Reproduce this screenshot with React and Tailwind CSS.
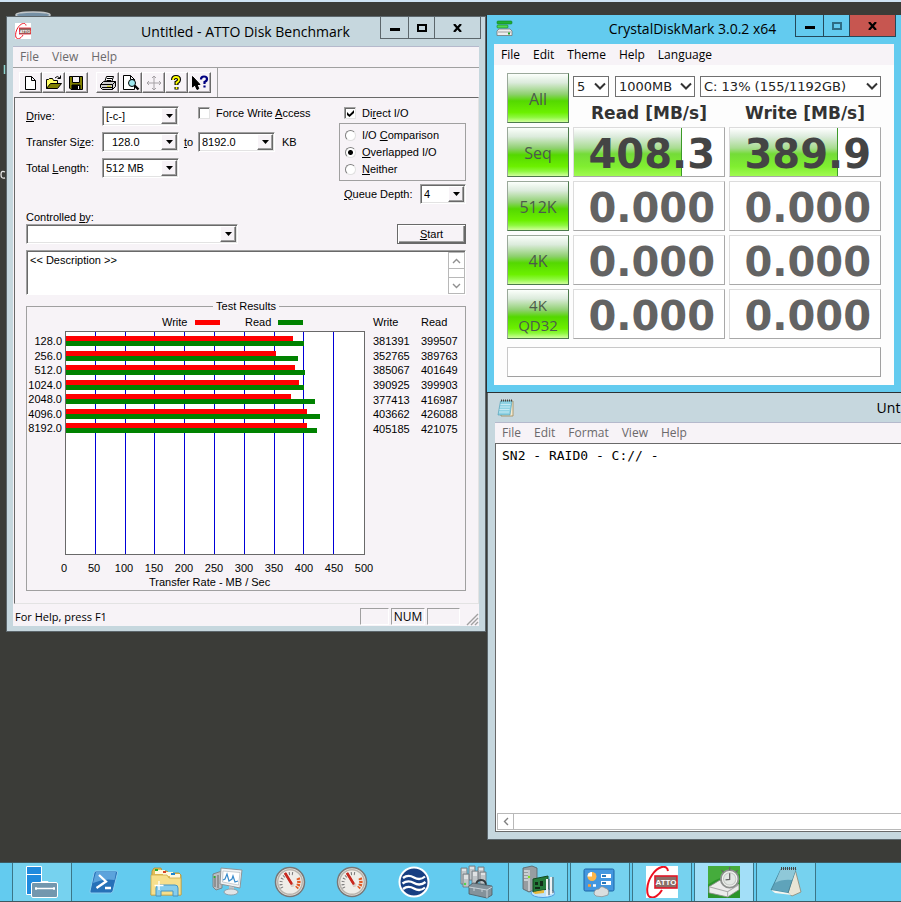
import React from "react";

import { useState } from "react";

import clsx from "clsx";

const results = [
    { size: "128.0", write: 381391, read: 399507 },
    { size: "256.0", write: 352765, read: 389763 },
    { size: "512.0", write: 385067, read: 401649 },
    { size: "1024.0", write: 390925, read: 399903 },
    { size: "2048.0", write: 377413, read: 416987 },
    { size: "4096.0", write: 403662, read: 426088 },
    { size: "8192.0", write: 405185, read: 421075 },
];

const axis = [0, 50, 100, 150, 200, 250, 300, 350, 400, 450, 500];

// KB/s to a share of the 500 MB/s axis
const barWidth = (value) => `${value / 5000}%`;

/* ---------- title bars ---------- */

const CaptionButtons = ({ active }) => (
    <div className={clsx("flex h-[22px] shrink-0 border border-t-0", active ? "border-[#24495a]" : "border-[#5c666b]")}>
        <button aria-label="Minimize" className={clsx("flex w-7 items-center justify-center border-r", active ? "border-[#24495a]" : "border-[#5c666b]")}>
            <span className="mt-1 h-[3px] w-[10px] bg-black"></span>
        </button>
        <button aria-label="Maximize" className={clsx("flex w-[26px] items-center justify-center border-r", active ? "border-[#24495a]" : "border-[#5c666b]")}>
            <span className={clsx("h-2 w-[10px]", active ? "border border-[#2d6d85] shadow-[inset_0_0_0_1px_#2d6d85]" : "border-2 border-black")}></span>
        </button>
        <button aria-label="Close" className={clsx("flex w-[45px] items-center justify-center", active && "bg-[#c75650]")}>
            <svg width="9" height="8" viewBox="0 0 9 8">
                <path d="M1 0 L8 8 M8 0 L1 8" stroke="#000" strokeWidth="2.2" />
            </svg>
        </button>
    </div>
);

const MenuBar = ({ items, className }) => (
    <nav className={clsx("flex h-[21px] items-center gap-[13px] bg-[#f7f3f7] pl-[7px] text-[12px]", className)}>
        {items.map((item) => (
            <button key={item}>{item}</button>
        ))}
    </nav>
);

/* ---------- ATTO ---------- */

const Combo = ({ id, value, label, className, indent }) => (
    <div className={clsx("relative h-5", className)}>
        <select
            id={id}
            aria-label={label}
            className={clsx(
                "block h-full w-full appearance-none border border-t-[#a0a0a0] border-l-[#a0a0a0] border-r-white border-b-white bg-white pt-px pr-5 text-[11px] shadow-[inset_1px_1px_0_#696969,inset_-1px_-1px_0_#e3e3e3] outline-none",
                indent ? "pl-[9px]" : "pl-[3px]"
            )}
        >
            <option>{value}</option>
        </select>
        <span className="pointer-events-none absolute top-[2px] right-[2px] bottom-[2px] flex w-4 items-center justify-center border border-t-white border-l-white border-r-[#696969] border-b-[#696969] bg-[#f7f3f7] shadow-[inset_-1px_-1px_0_#a0a0a0]">
            <svg width="7" height="4" viewBox="0 0 7 4">
                <path d="M0 0 H7 L3.5 4 Z" />
            </svg>
        </span>
    </div>
);

const Check = ({ checked, children }) => {
    const [on, setOn] = useState(checked);

    return (
        <label className="flex h-[14px] items-center gap-[6px]">
            <span className="relative h-3 w-3">
                <input
                    type="checkbox"
                    checked={on}
                    onChange={() => setOn(!on)}
                    className="block h-3 w-3 appearance-none border border-t-[#a0a0a0] border-l-[#a0a0a0] border-r-[#e3e3e3] border-b-[#e3e3e3] bg-white shadow-[inset_1px_1px_0_#696969]"
                />
                {on && (
                    <svg className="pointer-events-none absolute top-[3px] left-[3px]" width="7" height="7" viewBox="0 0 7 7">
                        <path d="M0 2 L2.5 4.5 L7 0 V3 L2.5 7 L0 5 Z" />
                    </svg>
                )}
            </span>
            <span>{children}</span>
        </label>
    );
};

const Radio = ({ value, mode, setMode, children }) => (
    <label className="flex h-[17px] items-center gap-[6px]">
        <input
            type="radio"
            name="io-mode"
            checked={mode === value}
            onChange={() => setMode(value)}
            className="h-[11px] w-[11px] appearance-none rounded-full border border-t-[#808080] border-l-[#808080] border-r-[#e0e0e0] border-b-[#e0e0e0] bg-white checked:bg-[radial-gradient(circle,#000_2px,#fff_3px)]"
        />
        <span>{children}</span>
    </label>
);

const ToolButton = ({ label, children }) => (
    <button
        aria-label={label}
        className="flex h-[21px] w-[23px] items-center justify-center border border-t-white border-l-white border-r-[#696969] border-b-[#696969] shadow-[inset_-1px_-1px_0_#b0acb0]"
    >
        <svg width="18" height="16" viewBox="0 0 18 16" fill="none" stroke="#000">
            {children}
        </svg>
    </button>
);

const ToolBar = () => (
    <div className="flex h-[29px] items-center pl-[6px]">
        <ToolButton label="New">
            <path d="M3.5 1.5 H9.500 L13.5 5.5 V14.5 H3.5 Z M9.500 1.5 V5.5 H13.5" fill="#fff" />
        </ToolButton>
        <ToolButton label="Open">
            <path d="M1.5 13.5 V4.5 H3.5 L4.5 3.5 H7.5 L8.5 5.5 H12.5 V8.5" fill="#ffff66" />
            <path d="M1.5 13.5 L5.5 8.5 H16.5 L12.5 13.5 Z" fill="#808000" />
            <path d="M10 3 Q12 0 15 3 M15.5 0.5 V3.5 H12.5" />
        </ToolButton>
        <ToolButton label="Save">
            <path d="M1.5 1.5 H14.5 V14.5 H3 L1.5 13 Z" fill="#808000" />
            <path d="M4.5 1.5 H11.5 V7.5 H4.5 Z" fill="#f7f3f7" />
            <path d="M4 10 H12 V14 H4 Z" fill="#000" />
            <path d="M10.5 11 V14" stroke="#fff" />
        </ToolButton>
        <div className="w-2"></div>
        <ToolButton label="Print">
            <path d="M5.5 7.5 L7.5 1.5 H14.5 L12.5 7.5 Z" fill="#fff" />
            <path d="M8 3.5 H13 M7.5 5.5 H12" />
            <path d="M1.5 9.5 L4.5 6.5 H16.5 V11.5 L13.5 14.5 H3.5 L1.5 12.5 Z" fill="#d0d0d0" />
            <path d="M1.5 9.5 H13.5 L16.5 6.5 M13.5 9.5 V14.5 M3 12.5 H13" />
            <path d="M8 11.3 H12" stroke="#c8c800" />
        </ToolButton>
        <ToolButton label="Print Preview">
            <path d="M1.5 0.5 H8.5 L12.5 4.5 V14.5 H1.5 Z M8.5 0.5 V4.5 H12.5" fill="#fff" />
            <circle cx="10" cy="8" r="3.5" fill="#9fe8f0" />
            <path d="M12.5 10.5 L16.5 14.5" strokeWidth="2.4" />
        </ToolButton>
        <ToolButton label="Move">
            <path d="M9 1 V15 M2 8 H16 M7 3 L9 1 L11 3 M7 13 L9 15 L11 13 M4 6 L2 8 L4 10 M14 6 L16 8 L14 10" stroke="#a5a1a5" />
        </ToolButton>
        <ToolButton label="About">
            <path d="M5 5 Q5 2 8 2 Q11 2 11 4.5 Q11 6.5 8.5 7.5 V10 M8.5 12 V14.5" strokeWidth="4" />
            <path d="M5 5 Q5 2 8 2 Q11 2 11 4.5 Q11 6.5 8.5 7.5 V9.5 M8.5 12 V14" stroke="#ffff00" strokeWidth="1.8" />
        </ToolButton>
        <ToolButton label="Context Help">
            <path d="M1.5 1.5 V12 L4 10 L6 14.5 L7.8 13.7 L6 9.5 H9 Z" fill="#000" />
            <path d="M10 4.5 Q10 1.5 13 1.5 Q16 1.5 16 4 Q16 6 13.5 7 V9 M13.5 10.5 V12.5" stroke="#000080" strokeWidth="2.2" />
        </ToolButton>
        <div className="ml-[6px] h-full w-px bg-[#a0a0a0]"></div>
    </div>
);

const TestResults = () => (
    <fieldset className="mt-1 flex border border-[#a0a0a0] pb-px">
        <legend className="mx-auto h-[14px] px-[3px] leading-[14px]">Test Results</legend>

        <div className="flex">
            <div className="w-[338px]">
                <div className="flex h-[18px] items-center pl-[135px]">
                    <span className="w-[33px]">Write</span>
                    <span className="h-[5px] w-[25px] bg-[#ff0000]"></span>
                    <span className="ml-[25px] w-[33px]">Read</span>
                    <span className="h-[5px] w-[25px] bg-[#008200]"></span>
                </div>

                <div className="flex">
                    <div className="flex h-[105px] w-[38px] flex-col pt-[3px] pr-[3px] text-right leading-[15px]">
                        {results.map((row) => (
                            <span key={row.size} className="min-h-0 flex-1">{row.size}</span>
                        ))}
                    </div>

                    <div className="grid h-[224px] w-[300px] border border-[#696969] bg-white">
                        <div className="col-start-1 row-start-1 grid grid-cols-10">
                            {axis.slice(1).map((mark) => (
                                <div key={mark} className="border-r border-[#0000d8] last:border-r-0"></div>
                            ))}
                        </div>
                        <div className="col-start-1 row-start-1 flex h-[104px] flex-col pt-[2px]">
                            {results.map((row) => (
                                <div key={row.size} className="flex-1 pt-[2px]">
                                    <div className="h-[5px] bg-[#ff0000]" style={{ width: barWidth(row.write) }}></div>
                                    <div className="h-[5px] bg-[#008200]" style={{ width: barWidth(row.read) }}></div>
                                </div>
                            ))}
                        </div>
                    </div>
                </div>

                <div className="mt-[6px] ml-[22px] flex leading-[14px]">
                    {axis.map((mark) => (
                        <span key={mark} className="w-[30px] shrink-0 text-center">{mark}</span>
                    ))}
                </div>
                <p className="pl-[122px] leading-[14px]">Transfer Rate - MB / Sec</p>
            </div>

            <table className="ml-2 h-[123px] text-left leading-[14px]">
                <thead>
                    <tr className="h-[21px] align-top">
                        <th className="w-12 pt-[2px] font-normal">Write</th>
                        <th className="pt-[2px] font-normal">Read</th>
                    </tr>
                </thead>
                <tbody>
                    {results.map((row) => (
                        <tr key={row.size}>
                            <td>{row.write}</td>
                            <td>{row.read}</td>
                        </tr>
                    ))}
                </tbody>
            </table>
        </div>
    </fieldset>
);

const AttoLogo = ({ size }) => (
    <svg width={size} height={size} viewBox="0 0 32 32">
        <rect width="32" height="32" fill="#fff" />
        <path d="M22 5 C21 -2 12 0 6 9 C0 18 0 29 4 31 C8 33 13 29 16 24" fill="none" stroke="#ee1020" strokeWidth="2" />
        <rect x="9" y="10" width="22" height="12" fill="#8a6f68" stroke="#e01828" strokeWidth="1.6" />
        <text x="20" y="19" textAnchor="middle" fontFamily="Liberation Sans, sans-serif" fontSize="8" fontWeight="bold" fill="#fff">ATTO</text>
    </svg>
);

const AttoWindow = () => {
    const [mode, setMode] = useState("overlapped");

    return (
        <section className="absolute top-4 left-[6px] w-[480px] border border-[#5c666b] bg-[#c6d7de] px-[6px] pb-[5px]">
            <header className="-mr-[2px] flex h-[29px] items-start">
                <div className="w-[118px] shrink-0 pt-[6px] pl-[2px]">
                    <AttoLogo size={16} />
                </div>
                <h1 className="flex-1 pt-[3px] text-center text-[14px] leading-[24px]">Untitled - ATTO Disk Benchmark</h1>
                <div className="ml-5">
                    <CaptionButtons />
                </div>
            </header>

            <div className="bg-[#f7f3f7]">
                <MenuBar items={["File", "View", "Help"]} className="border-t border-[#b5b9cc] text-[#6b696b]" />
                <div className="border-t border-[#a0a0a0]">
                    <ToolBar />
                </div>

                <div className="ml-px border border-t-[#696969] border-l-[#696969] border-r-[#e3e3e3] border-b-[#e3e3e3] pt-2 pr-3 pb-3 pl-[11px] font-['Liberation_Sans',Arial,sans-serif] text-[11px]">
                    <div className="flex justify-between">
                        <div>
                            <div className="flex items-center">
                                <label htmlFor="drive" className="w-[76px]"><u>D</u>rive:</label>
                                <Combo id="drive" value="[-c-]" className="w-[77px]" />
                                <div className="ml-[19px] self-start">
                                    <Check checked={false}>Force Write <u>A</u>ccess</Check>
                                </div>
                            </div>
                            <div className="mt-[6px] flex items-center">
                                <label htmlFor="from" className="w-[76px]">Transfer Si<u>z</u>e:</label>
                                <Combo id="from" value="128.0" indent className="w-[77px]" />
                                <label htmlFor="to" className="w-[19px] text-center"><u>t</u>o</label>
                                <Combo id="to" value="8192.0" className="w-[77px]" />
                                <span className="ml-[7px]">KB</span>
                            </div>
                            <div className="mt-[6px] flex items-center">
                                <label htmlFor="length" className="w-[76px]">Total <u>L</u>ength:</label>
                                <Combo id="length" value="512 MB" className="w-[77px]" />
                            </div>
                            <label htmlFor="controlled" className="mt-8 block leading-[14px]">Controlled <u>b</u>y:</label>
                            <Combo id="controlled" value="" className="w-[212px]" />
                        </div>

                        <div className="w-[127px]">
                            <div className="pl-[5px]">
                                <Check checked={true}>Di<u>r</u>ect I/O</Check>
                            </div>
                            <div role="radiogroup" aria-label="I/O mode" className="mt-[3px] h-[58px] border border-[#a0a0a0] pt-[3px] pl-[5px]">
                                <Radio value="comparison" mode={mode} setMode={setMode}>I/O <u>C</u>omparison</Radio>
                                <Radio value="overlapped" mode={mode} setMode={setMode}><u>O</u>verlapped I/O</Radio>
                                <Radio value="neither" mode={mode} setMode={setMode}><u>N</u>either</Radio>
                            </div>
                            <div className="mt-[3px] flex items-center justify-between pl-[5px]">
                                <label htmlFor="queue"><u>Q</u>ueue Depth:</label>
                                <Combo id="queue" value="4" className="w-[46px]" />
                            </div>
                            <button className="mt-5 ml-auto block h-5 w-[69px] border border-[#696969] shadow-[inset_1px_1px_0_#fff,inset_-1px_-1px_0_#696969,inset_-2px_-2px_0_#a0a0a0]">
                                <u>S</u>tart
                            </button>
                        </div>
                    </div>

                    <div className="mt-[6px] flex h-[45px] border border-t-[#a0a0a0] border-l-[#a0a0a0] border-r-white border-b-white bg-white shadow-[inset_1px_1px_0_#696969]">
                        <textarea
                            aria-label="Description"
                            defaultValue="<< Description >>"
                            className="flex-1 resize-none overflow-hidden bg-transparent pt-[2px] pl-[3px] leading-[14px] outline-none"
                        />
                        <div className="mt-px flex w-[17px] flex-col border border-[#b8b8b8] bg-white">
                            <button aria-label="Scroll up" className="flex h-4 items-center justify-center border-b border-[#b8b8b8]">
                                <svg width="9" height="6" viewBox="0 0 9 6"><path d="M1 5 L4.5 1.5 L8 5" fill="none" stroke="#909090" strokeWidth="1.4" /></svg>
                            </button>
                            <div className="flex-1"></div>
                            <button aria-label="Scroll down" className="flex h-4 items-center justify-center border-t border-[#b8b8b8]">
                                <svg width="9" height="6" viewBox="0 0 9 6"><path d="M1 1 L4.5 4.5 L8 1" fill="none" stroke="#909090" strokeWidth="1.4" /></svg>
                            </button>
                        </div>
                    </div>

                    <TestResults />
                </div>

                <footer className="flex h-[22px] items-end pl-[2px]">
                    <span className="flex-1 text-[11px] leading-[19px]">For Help, press F1</span>
                    <span className="mb-px h-[17px] w-[29px] border border-t-[#a0a0a0] border-l-[#a0a0a0] border-r-white border-b-white"></span>
                    <span className="mb-px ml-[2px] h-[17px] w-[34px] border border-t-[#a0a0a0] border-l-[#a0a0a0] border-r-white border-b-white text-center text-[12px] leading-[16px]">NUM</span>
                    <span className="mr-[6px] mb-px ml-[2px] h-[17px] w-[33px] border border-t-[#a0a0a0] border-l-[#a0a0a0] border-r-white border-b-white"></span>
                    <svg width="13" height="13" viewBox="0 0 13 13" fill="none" stroke="#a0a0a0" strokeWidth="1.4">
                        <path d="M1 12 L12 1 M5 12 L12 5 M9 12 L12 9" />
                    </svg>
                </footer>
            </div>
        </section>
    );
};

/* ---------- CrystalDiskMark ---------- */

const tests = [
    { name: ["Seq"], read: "408.3", write: "389.9", fill: true },
    { name: ["512K"], read: "0.000", write: "0.000" },
    { name: ["4K"], read: "0.000", write: "0.000" },
    { name: ["4K", "QD32"], read: "0.000", write: "0.000" },
];

const GreenButton = ({ lines }) => (
    <button
        className={clsx(
            "h-[50px] border border-t-[#9aa89a] border-l-[#9aa89a] border-r-[#4c7a4c] border-b-[#4c7a4c] bg-[linear-gradient(to_bottom,#fbfffb_0%,#dcebdc_18%,#8fd070_42%,#54d800_56%,#6cf000_80%,#8cf83c_90%,#d0ff9c_100%)] pt-[2px] text-center font-['Comic_Sans_MS','Open_Sans',sans-serif] text-[#4c5a4c]",
            lines.length > 1 ? "text-[15px] leading-[20px]" : "text-[16px]"
        )}
    >
        {lines.map((line) => (
            <span key={line} className="block">{line}</span>
        ))}
    </button>
);

const Score = ({ value, fill }) => (
    <div className="grid h-[50px] border border-t-[#dcdcdc] border-l-[#dcdcdc] border-r-[#a8a8a8] border-b-[#a8a8a8] bg-white">
        {fill && (
            <div className="col-start-1 row-start-1 w-[72%] border-r border-[#3c9a28] bg-[linear-gradient(to_bottom,#ffffff_0%,#dcebdc_18%,#a8dc90_42%,#74dc38_54%,#80ee30_80%,#a0fa50_100%)]"></div>
        )}
        <output
            className={clsx(
                "col-start-1 row-start-1 flex items-center justify-end pt-1 pr-[9px] font-['DejaVu_Sans',Verdana,sans-serif] text-[40px] leading-none font-bold",
                fill ? "text-[#444444]" : "text-[#636363]"
            )}
        >
            {value}
        </output>
    </div>
);

const FlatSelect = ({ label, value, className }) => (
    <div className={clsx("relative h-[21px]", className)}>
        <select aria-label={label} className="block h-full w-full appearance-none border border-[#707070] bg-white pl-[3px] text-[13px] text-[#222222] outline-none">
            <option>{value}</option>
        </select>
        <svg className="pointer-events-none absolute top-[6px] right-[3px]" width="12" height="9" viewBox="0 0 12 9">
            <path d="M1 1.5 L6 6.500 L11 1.5" fill="none" stroke="#333" strokeWidth="2" />
        </svg>
    </div>
);

const CrystalWindow = () => (
    <section className="absolute top-[15px] right-0 left-[486px] border-b border-l border-[#2b3133] bg-[#63cbef] pr-[7px] pb-[7px] pl-[7px]">
        <header className="-mr-[2px] flex h-[29px] items-start">
            <div className="w-[104px] shrink-0 pt-[5px] pl-[2px]">
                <svg width="18" height="17" viewBox="0 0 18 17">
                    <rect x="1" y="1" width="15" height="3" rx="1" fill="#20b030" stroke="#108020" strokeWidth=".6" />
                    <rect x="1" y="5" width="11" height="3" rx="1" fill="#50d850" stroke="#108020" strokeWidth=".6" />
                    <path d="M3 9 H14 L16 11 V15.5 H1 V11 Z" fill="#eeeeee" stroke="#777" strokeWidth=".8" />
                    <path d="M2 12 H15" stroke="#a0a0a0" />
                    <rect x="12" y="12.5" width="2" height="2" fill="#20a020" />
                </svg>
            </div>
            <h1 className="flex-1 pt-[2px] text-center text-[14px] leading-[24px]">CrystalDiskMark 3.0.2 x64</h1>
            <div className="ml-2">
                <CaptionButtons active />
            </div>
        </header>

        <MenuBar items={["File", "Edit", "Theme", "Help", "Language"]} />

        <div className="bg-[#fdfdfd] px-[13px] pt-2 pb-2 font-['DejaVu_Sans',Verdana,sans-serif]">
            <div className="grid grid-cols-[62px_1fr_1fr] gap-1">
                <GreenButton lines={["All"]} />
                <div className="col-span-2 pt-[3px]">
                    <div className="flex">
                        <FlatSelect label="Test count" value="5" className="w-9" />
                        <FlatSelect label="Test size" value="1000MB" className="ml-[6px] w-20" />
                        <FlatSelect label="Drive" value="C: 13% (155/1192GB)" className="ml-[5px] flex-1" />
                    </div>
                    <div className="mt-[6px] grid grid-cols-2 gap-1 text-center text-[17px] leading-[20px] font-bold text-[#333333]">
                        <span>Read [MB/s]</span>
                        <span>Write [MB/s]</span>
                    </div>
                </div>
                {tests.map((test) => (
                    <React.Fragment key={test.name.join(" ")}>
                        <GreenButton lines={test.name} />
                        <Score value={test.read} fill={test.fill} />
                        <Score value={test.write} fill={test.fill} />
                    </React.Fragment>
                ))}
            </div>
            <input
                aria-label="Comment"
                className="mt-2 block h-[30px] w-full border border-t-[#c8c8c8] border-l-[#c8c8c8] border-r-[#a0a0a0] border-b-[#a0a0a0] bg-white px-2 text-[13px] outline-none"
            />
        </div>
    </section>
);

/* ---------- Notepad ---------- */

const NotepadWindow = () => (
    <section className="absolute top-[393px] left-[487px] w-[908px] border border-t-0 border-[#5c666b] bg-[#c6d7de] px-[7px] pb-[7px]">
        <header className="flex h-[29px] items-center">
            <svg className="ml-[2px]" width="18" height="18" viewBox="0 0 18 18">
                <path d="M4 2 H16 V17 H4 Z" fill="#f4ead0" stroke="#a08858" strokeWidth=".8" />
                <path d="M3.5 2 H15 L13 16 H1 Z" fill="#8fd3e4" stroke="#4a9ab4" strokeWidth=".6" />
                <path d="M3.5 5.5 H13.5 M3 8 H13 M2.5 10.5 H12.5 M2 13 H12" stroke="#d4f0f6" strokeWidth=".8" />
                <path d="M4 1.5 H15" stroke="#444" strokeDasharray="1 1" strokeWidth="2" />
            </svg>
            <h1 className="flex-1 pr-7 text-center text-[14px]">Untitled - Notepad</h1>
        </header>
        <MenuBar items={["File", "Edit", "Format", "View", "Help"]} className="border-t border-[#b5b9cc] text-[#6b696b]" />
        <div className="border border-[#696969] bg-white">
            <textarea
                aria-label="Note"
                defaultValue="SN2 - RAID0 - C:// -"
                className="block h-[369px] w-full resize-none overflow-hidden pt-[3px] pl-[6px] font-['DejaVu_Sans_Mono',Consolas,monospace] text-[13px] leading-[17px] outline-none"
            />
            <div className="mb-px ml-px flex h-[17px] border border-[#b8b8b8]">
                <button aria-label="Scroll left" className="flex w-4 items-center justify-center border-r border-[#b8b8b8]">
                    <svg width="6" height="9" viewBox="0 0 6 9"><path d="M5 1 L1.5 4.5 L5 8" fill="none" stroke="#808080" strokeWidth="1.4" /></svg>
                </button>
            </div>
        </div>
    </section>
);

/* ---------- taskbar ---------- */

const ServerManagerIcon = () => (
    <svg width="32" height="32" viewBox="0 0 32 32" stroke="#fff">
        <path d="M.5 .5 H15.5 V28.5 H.5 Z" fill="#1f8ade" />
        <path d="M.5 8.5 H15.5" />
        <path d="M15 17 V15.5 H22 V17" fill="none" />
        <rect x="5.5" y="16.5" width="26" height="15" rx="1.5" fill="#7397ae" />
        <path d="M9 22.5 H29 M10 21 V24 M28 21 V24" strokeWidth="1.3" />
    </svg>
);

const PowerShellIcon = () => (
    <svg width="32" height="32" viewBox="0 0 32 32">
        <path d="M8 5 H28 Q30 5 29.5 7 L25 25 Q24.5 27 22.5 27 H3 Q1.5 27 2 25 L6 7 Q6.5 5 8 5 Z" fill="#2671b8" stroke="#8ccdf0" />
        <path d="M8 6 H28 L26.5 14 Q16 12 5 17 Z" fill="#5ca3dc" />
        <path d="M11 9 L18 15.5 L8.5 22 M17 22 H23" fill="none" stroke="#fff" strokeWidth="2.3" />
    </svg>
);

const ExplorerIcon = () => (
    <svg width="34" height="32" viewBox="0 0 34 32">
        <path d="M3 5 L5 2 H12 L13 5 H18 L20 7 H30 L32 9 V29 H2 Z" fill="#e3bd55" stroke="#b98f30" strokeWidth=".8" />
        <path d="M6 4 H16 V8 H6 Z M14 6 H24 V10 H14 Z M21 8 H31 V12 H21 Z" fill="#fff8dc" />
        <path d="M6 3 H9 V5 H6 Z" fill="#22ac2c" /><path d="M14 5 H17 V7 H14 Z" fill="#d84525" /><path d="M22 7 H26 V9 H22 Z" fill="#1b86d4" />
        <path d="M2 9 H18 L20 12 H32 V29 H2 Z" fill="#f6df8c" stroke="#cda94a" strokeWidth=".8" />
        <path d="M7 30 V22 Q7 19 10 19 H26 Q29 19 29 22 V30 H24 V25 H12 V30 Z" fill="#86cdec" stroke="#4595c4" />
        <path d="M10 15 V24 M5.5 19.5 H14.5" stroke="#fff" strokeWidth="1.3" />
    </svg>
);

const MonitorIcon = () => (
    <svg width="32" height="32" viewBox="0 0 32 32">
        <path d="M1 8 L10 5 V22 L4 24 L1 21 Z" fill="#b9bec2" stroke="#777" strokeWidth=".8" />
        <path d="M3 10 V21 M6 9 V22" stroke="#666" />
        <path d="M9 2 L30 4 L28 22 L8 18 Z" fill="#f0f2f4" stroke="#8e9599" />
        <path d="M11 5 L28 6.5 L26.5 19 L10.5 16 Z" fill="#fff" stroke="#a7b0b6" strokeWidth=".6" />
        <path d="M11 14 L13 13 L15 8 L17 15 L20 13 L21 10 L23 16 L26 15" fill="none" stroke="#368acc" strokeWidth="1.2" />
        <path d="M17 20 L22 21 V25 L17 24 Z" fill="#bfc4c8" />
        <ellipse cx="19" cy="26" rx="7" ry="3" fill="#e1e5e8" stroke="#8d9499" strokeWidth=".8" />
        <circle cx="2.5" cy="11" r="1" fill="#20b820" />
    </svg>
);

const GaugeIcon = () => (
    <svg width="32" height="32" viewBox="0 0 32 32">
        <circle cx="16" cy="16" r="14.5" fill="#e4e0da" stroke="#777" strokeWidth="1.5" />
        <circle cx="16" cy="16" r="12.3" fill="#efede8" stroke="#b9b5ae" strokeWidth="1.5" />
        <path d="M8 22 A10 10 0 0 1 20 8" fill="none" stroke="#777" strokeWidth="3" strokeDasharray="1 2" />
        <path d="M24 12 A9 9 0 0 1 22.5 22" fill="none" stroke="#e05a24" strokeWidth="3.5" strokeDasharray="2 1" />
        <path d="M11 7 L19 20" stroke="#c8281e" strokeWidth="2.5" />
        <circle cx="18.5" cy="19" r="2" fill="#d9d4cc" />
        <path d="M11 7 L18 18.500" stroke="#c8281e" strokeWidth="2" />
    </svg>
);

const WaveIcon = () => (
    <svg width="32" height="32" viewBox="0 0 32 32">
        <circle cx="16" cy="16" r="14.5" fill="#173f82" stroke="#fff" strokeWidth="2" />
        <path d="M5 12 Q10 8 16 11.5 Q22 15 27 10.5 M4.5 17.5 Q10 13.5 16 17 Q22 20.5 27.5 16 M5 23 Q10 19 16 22.5 Q22 26 27 21.5" fill="none" stroke="#fff" strokeWidth="2.3" />
    </svg>
);

const ToolboxIcon = () => (
    <svg width="34" height="34" viewBox="0 0 34 34">
        {["M2 3 h6 v16 h-6 Z", "M10 1 h6 v14 h-6 Z", "M19 2 h6 v14 h-6 Z", "M4 9 h6 v13 h-6 Z", "M13 6 h6 v14 h-6 Z", "M21 7 h6 v12 h-6 Z"].map((d) => (
            <path key={d} d={d} fill="#c0c5c8" stroke="#6d757a" strokeWidth=".8" />
        ))}
        <path d="M3 5 h4 M11 3 h4 M20 4 h4 M5 11 h4 M14 8 h4 M22 9 h4 M5 13 h4 M14 10 h4" stroke="#fff" />
        <path d="M17 21 Q17 15 22 15 Q27 15 27 21" fill="none" stroke="#333a3e" strokeWidth="1.8" />
        <path d="M10 21 L14 18 L33 21 V30 L28 33 L10 29 Z" fill="#84929b" stroke="#4c585f" strokeWidth=".8" />
        <path d="M10 22 L28 25 L33 22 M28 25 V33 M15 23 V26 M23 24 V27" fill="none" stroke="#c8d1d7" />
        <circle cx="6" cy="19" r="1.2" fill="#4cd24c" />
    </svg>
);

const ServerCardIcon = () => (
    <svg width="34" height="34" viewBox="0 0 34 34">
        <path d="M2 3 L11 1 L16 3 V24 L8 27 L2 24 Z" fill="#979da1" stroke="#555c60" strokeWidth=".8" />
        <path d="M8 5 V26 M3 6 h4 M3 9 h4 M3 12 h4 M3 15 h4" stroke="#dde1e4" strokeWidth="1.3" />
        <ellipse cx="22" cy="28" rx="12" ry="4.5" fill="#bfe3fa" stroke="#4b9de0" />
        <path d="M12 14 L27 11 V24 L12 27 Z" fill="#257a3a" stroke="#124a20" />
        <path d="M14 17 h3 v3 h-3 Z M19 16 h3 v5 h-3 Z M14 22 h5 v2 h-5 Z" fill="#122c18" />
        <path d="M12 27 L23 25 V28 L14 29 Z" fill="#e6b83a" />
        <path d="M26 14 V31 M30 12 V29" stroke="#eef1f3" strokeWidth="2" />
        <path d="M28 14 V30 M32 12 V28" stroke="#555" />
        <circle cx="8" cy="12" r="1.2" fill="#80e020" />
    </svg>
);

const ControlIcon = () => (
    <svg width="34" height="32" viewBox="0 0 34 32">
        <rect x="1" y="3" width="30" height="22" rx="1.5" fill="#4497df" stroke="#1b65a6" />
        <circle cx="9" cy="10.5" r="4.5" fill="#ffb648" />
        <path d="M9 10.5 V6 A4.5 4.5 0 0 0 4.5 10.5 Z" fill="#fff" />
        <path d="M18 8 H28 V12 H18 Z M18 15 H28 V19 H18 Z" fill="#fff" />
        <path d="M19 9 H23 V11 H19 Z M19 16 H23 V18 H19 Z" fill="#2878bd" />
        <path d="M5 19.5 H8" stroke="#ff9c30" strokeWidth="2.5" /><path d="M10 19.5 H13" stroke="#fff" strokeWidth="2.5" />
        <path d="M11 28 Q11 23 16 23 Q18 19 22 22 Q27 23 25 29 Q19 32 13 30 Z" fill="#dadedf" stroke="#8a9296" strokeWidth=".8" />
    </svg>
);

const CrystalIcon = () => (
    <svg width="32" height="32" viewBox="0 0 31 31">
        <rect width="31" height="31" fill="#2c942c" />
        <path d="M0 0 H31 V8 Q14 8 0 18 Z" fill="#45ac3c" />
        <path d="M1 20 L11 14 L30 18 V23 L19 30 L1 26 Z" fill="#ececec" stroke="#8e8e8e" strokeWidth=".8" />
        <path d="M1 20 L19 25 L30 18 M19 25 V30" fill="none" stroke="#aaa" />
        <circle cx="21" cy="12.5" r="8.5" fill="#f4f4f2" stroke="#8d908e" strokeWidth="1.8" />
        <circle cx="21" cy="12.5" r="6" fill="#e3e7e4" stroke="#c3c8c4" />
        <path d="M17 13.500 L21 13 V7 M21 1 V4 M13 4 L15 6 M29 4 L27 6" fill="none" stroke="#666" strokeWidth="1.2" />
    </svg>
);

const NotesIcon = () => (
    <svg width="32" height="32" viewBox="0 0 32 32">
        <path d="M25 3 L31 26 L22 30 L18 27 Z" fill="#e9e5d6" stroke="#8d8571" strokeWidth=".8" />
        <path d="M11 3 H26 L18 27 L1 24 Z" fill="#5fa3ba" stroke="#407d92" strokeWidth=".8" />
        <path d="M11 3 H26 L22 14 Q12 13 5 17 Z" fill="#8fc8d8" />
        <path d="M1 24 L18 27 L22 29 L5 27 Z" fill="#f6f6f0" />
        <path d="M11 2.5 H27" stroke="#444" strokeWidth="3" strokeDasharray="1 1" />
    </svg>
);

const apps = [
    { name: "Server Manager", icon: <ServerManagerIcon />, open: true },
    { name: "PowerShell", icon: <PowerShellIcon /> },
    { name: "File Explorer", icon: <ExplorerIcon /> },
    { name: "Task Manager", icon: <MonitorIcon /> },
    { name: "Gauge A", icon: <GaugeIcon /> },
    { name: "Gauge B", icon: <GaugeIcon /> },
    { name: "Storage Manager", icon: <WaveIcon /> },
    { name: "Computer Management", icon: <ToolboxIcon /> },
    { name: "Device Manager", icon: <ServerCardIcon />, open: true },
    { name: "Control Panel", icon: <ControlIcon />, open: true },
    { name: "ATTO Disk Benchmark", icon: <AttoLogo size={32} />, open: true },
    { name: "CrystalDiskMark", icon: <CrystalIcon />, open: true, active: true },
    { name: "Notepad", icon: <NotesIcon />, open: true },
];

const TaskBar = () => (
    <div className="flex h-10 shrink-0 gap-[2px] border-t border-b border-[#3d5961] bg-[#63cbef] pl-3">
        {apps.map((app) => (
            <button
                key={app.name}
                aria-label={app.name}
                className={clsx(
                    "flex w-[60px] shrink-0 items-center justify-center border-r border-l",
                    app.open ? "border-[#3b7688]" : "border-transparent",
                    app.open && !app.active && "bg-[#76d2ef]",
                    app.active && "bg-[#a3dff8]"
                )}
            >
                {app.icon}
            </button>
        ))}
    </div>
);

const App = () => {
    return (
        <div className="flex h-screen flex-col overflow-hidden bg-[#3b3c38] font-['Open_Sans','Noto_Sans',sans-serif] text-black">
            <main className="relative flex-1 overflow-hidden border-t-2 border-[#cfe3f3]">
                {/* recycle bin rim, mostly hidden by the first window */}
                <svg className="absolute top-[9px] left-[14px]" width="38" height="12" viewBox="0 0 38 12">
                    <ellipse cx="19" cy="4" rx="17" ry="3" fill="#7590a5" stroke="#c3c8cb" strokeWidth="1.5" />
                </svg>
                {/* ends of desktop captions that stick out on the left */}
                <svg className="absolute top-[60px] left-0" width="6" height="122" viewBox="0 0 6 122">
                    <path d="M4.500 3 V12" stroke="#8fd6d0" strokeWidth="1.500" />
                    <path d="M5 110 Q1 108 1 112.500 Q1 117 5 116" fill="none" stroke="#e8e8e8" strokeWidth="1.300" />
                </svg>
                <div className="absolute -top-[2px] right-0 bottom-0 left-0">
                    <NotepadWindow />
                    <AttoWindow />
                    <CrystalWindow />
                </div>
            </main>
            <TaskBar />
        </div>
    );
};

export default App;
